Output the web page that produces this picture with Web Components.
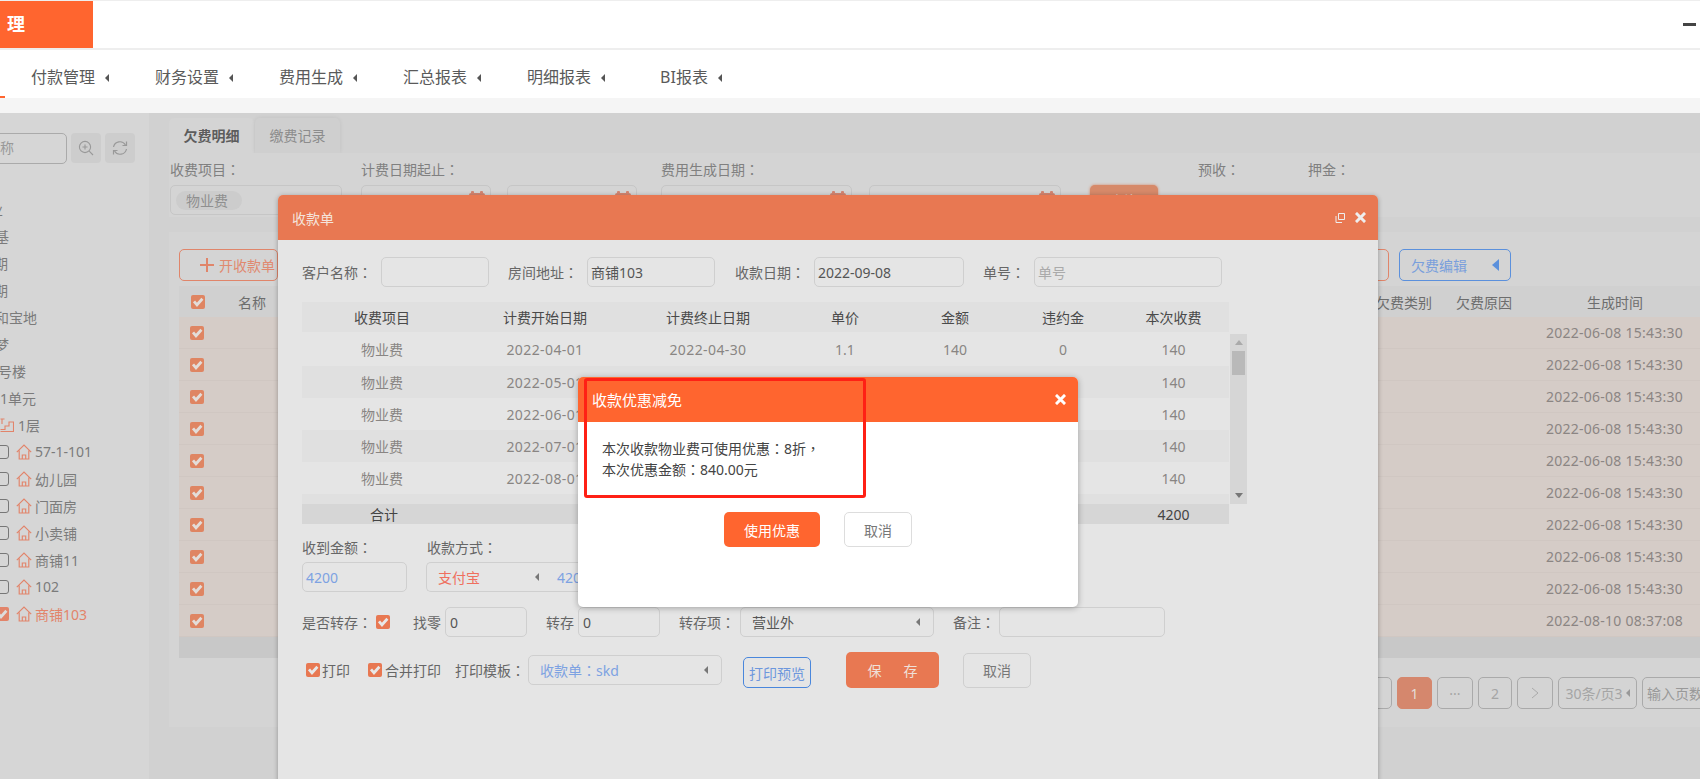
<!DOCTYPE html>
<html lang="zh"><head><meta charset="utf-8"><title>收款单</title>
<style>html,body{margin:0;padding:0;height:779px;overflow:hidden;background:#fff}</style></head>
<body><app-page></app-page>
<script>
const def=(name,css,html)=>customElements.define(name,class extends HTMLElement{
  connectedCallback(){ if(this.shadowRoot) return;
    this.attachShadow({mode:'open'}).innerHTML=`<style>${css}</style>`+(typeof html==='function'?html(this):(html||'<slot></slot>'));}
});
const range=n=>Array.from({length:n},(_,i)=>i);
const C=`<span lang="zh-TW" style="font-family:'Noto Sans CJK TC',sans-serif">：</span>`;
const K=`<span lang="zh-TW" style="font-family:'Noto Sans CJK TC',sans-serif">，</span>`;
const closeIcon=`<svg width="11" height="11" viewBox="0 0 11 11"><path d="M2 2L9 9M9 2L2 9" stroke="currentColor" stroke-width="3" stroke-linecap="square"/></svg>`;

def('x-caret',`:host{display:inline-block;width:0;height:0;border-style:solid;border-width:var(--s,4px) var(--w,5px) var(--s,4px) 0;border-color:transparent currentColor transparent transparent;flex:none}`,'');
def('x-check',`:host{display:inline-flex;flex:none;width:14px;height:14px;line-height:0}`,
  h=>h.hasAttribute('off')
   ?`<svg width="14" height="14" viewBox="0 0 14 14"><rect x=".5" y=".5" width="13" height="13" rx="2.5" fill="none" stroke="#777"/></svg>`
   :`<svg width="14" height="14" viewBox="0 0 14 14"><rect width="14" height="14" rx="2" fill="var(--c,#e87852)"/><path d="M3 6.3L6 9.8L11.4 3.8" fill="none" stroke="var(--k,#e8e8e8)" stroke-width="2.8"/></svg>`);
def('x-box',`:host{display:flex;align-items:center;flex:none;box-sizing:border-box;height:30px;border:1px solid var(--bd,#cdcdcd);border-radius:5px;padding:0 3px;color:#555;white-space:nowrap;overflow:hidden}`);
def('x-label',`:host{display:block;flex:none;white-space:nowrap;color:#666}`);

def('app-header',`:host{display:flex;justify-content:space-between;align-items:center;height:47px;border-top:1px solid #eee;border-bottom:2px solid #eee;background:#fff}
 .logo{width:93px;height:47px;background:#ff652f;color:#fff;font-weight:700;font-size:18px;line-height:47px;padding-left:7px;box-sizing:border-box}
 .min{width:13px;height:3px;background:#444;margin-right:4px}`,
 `<div class="logo">理</div><div class="min"></div>`);

def('app-nav',`:host{display:flex;position:relative;height:48px;box-sizing:border-box;padding:4px 0 0 31px;background:#fff;align-items:center;font-size:16px;color:#5a5a5a}
 .i{display:flex;align-items:center;gap:10px;margin-right:46px;white-space:nowrap}
 .i x-caret{color:#555;--s:4px;--w:4px;margin-top:3px}
 .i.bi{margin-left:9px}
 .mark{position:absolute;left:0;bottom:0;width:5px;height:2px;background:#ff652f}`,
 ()=>['付款管理','财务设置','费用生成','汇总报表','明细报表','BI报表'].map(t=>`<div class="i ${t[0]=='B'?'bi':''}">${t}<x-caret></x-caret></div>`).join('')+`<div class="mark"></div>`);

const house=`<svg width="16" height="16" viewBox="0 0 16 16" fill="none" stroke="#e2846a" stroke-width="1.15"><path d="M.8 8.2L8 1l7.2 7.2M3.2 6.6V15h9.6V6.6M6.3 15v-4h3.4v4"/></svg>`;
const stairs=`<svg width="14" height="14" viewBox="0 0 14 14" fill="none" stroke="#e2846a" stroke-width="1.1"><path d="M.5 13.5h13V4H9v4H5v3.5H.5M.5 1h4M2 1v5"/></svg>`;
def('tree-line',`:host{display:flex;align-items:center;height:27px;white-space:nowrap;color:#7b7b7b;font-size:14px;flex:none}
 :host([sel]){color:#e2846a}
 svg{flex:none}`);
def('side-tree',`:host{display:block;width:149px;flex:none;background:#d6d6d6;overflow:hidden;box-sizing:border-box;padding-top:20px}
 .s{display:flex;gap:4px;margin-left:-33px;height:31px}
 .inp{width:100px;height:31px;box-sizing:border-box;border:1px solid #aaa;border-radius:5px;color:#999;font-size:14px;line-height:27px;padding-left:18px}
 .b{width:30px;height:30px;background:#cdcdcd;border-radius:4px;display:flex;align-items:center;justify-content:center}
 .t{margin-top:31px;display:flex;flex-direction:column}
 .g2{display:flex;align-items:center;gap:7px}
 .g3{display:flex;align-items:center;gap:4px}`,
 ()=>`<div class="s"><div class="inp">名称</div>
  <div class="b"><svg width="16" height="16" viewBox="0 0 16 16" fill="none" stroke="#999" stroke-width="1.1"><circle cx="7" cy="7" r="5.6"/><path d="M11.2 11.2L15 15M7 4.5v5M4.5 7h5"/></svg></div>
  <div class="b"><svg width="16" height="16" viewBox="0 0 16 16" fill="none" stroke="#999" stroke-width="1.2"><path d="M1.5 7A6.5 6.5 0 0 1 13.5 5M14.5 9A6.5 6.5 0 0 1 2.5 11"/><path d="M14.5 1.5v4h-4M1.5 14.5v-4h4"/></svg></div></div>
  <div class="t">
  <tree-line style="margin-left:-25px">物业</tree-line>
  <tree-line style="margin-left:-19px">地基</tree-line>
  <tree-line style="margin-left:-20px">一期</tree-line>
  <tree-line style="margin-left:-20px">二期</tree-line>
  <tree-line style="margin-left:-5px">和宝地</tree-line>
  <tree-line style="margin-left:-19px">美梦</tree-line>
  <tree-line style="margin-left:-2px">号楼</tree-line>
  <tree-line style="margin-left:0">1单元</tree-line>
  <tree-line style="margin-left:0"><div class="g3">${stairs}1层</div></tree-line>
  ${[['57-1-101'],['幼儿园'],['门面房'],['小卖铺'],['商铺11'],['102'],['商铺103',1]].map(([t,s])=>
   `<tree-line style="margin-left:-5px" ${s?'sel':''}><div class="g2"><x-check ${s?'':'off'} style="--c:#e2846a;--k:#ddd"></x-check>${house}<span style="margin-left:-4px">${t}</span></div></tree-line>`).join('')}
  </div>`);

def('bill-grid',`:host{display:block;font-size:14px;color:#6d6d6d}
 .r{display:grid;grid-template-columns:59px 1138px 80px 90px 1fr;align-items:center;height:32px}
 .h{height:31px;background:#d0d0d0}
 .d{background:#d5ccc7;border-bottom:1px solid #d0c7c2;box-sizing:border-box;color:#8b8583}
 x-check{--c:#df8562;--k:#e3ddd9;margin-left:11px}
 .h x-check{margin-left:12px}
 .tm{font-size:14px;letter-spacing:.25px}
 .ht{padding-left:41px}
 .bar{height:21px;background:#c8c8c8}`,
 ()=>`<div class="r h"><x-check></x-check><div>名称</div><div>欠费类别</div><div>欠费原因</div><div class="ht">生成时间</div></div>`+
  range(10).map(i=>`<div class="r d"><x-check></x-check><div></div><div></div><div></div><div class="tm">${i==9?'2022-08-10 08:37:08':'2022-06-08 15:43:30'}</div></div>`).join('')+`<div class="bar"></div>`);

def('bill-pager',`:host{display:flex;gap:5px;height:69px;box-sizing:border-box;padding:19px 0 0 1171px;font-size:14px;color:#a5a5a5;white-space:nowrap}
 .p{height:32px;box-sizing:border-box;border:1px solid #aaa;border-radius:5px;display:flex;align-items:center;justify-content:center;flex:none}
 .on{background:#d5876d;border-color:#d5876d;color:#e5dcd8}`,
 `<div class="p" style="width:42px"></div><div class="p on" style="width:35px">1</div><div class="p" style="width:36px">···</div><div class="p" style="width:34px">2</div>
  <div class="p" style="width:36px"><svg width="8" height="12" viewBox="0 0 8 12" fill="none" stroke="#aaa"><path d="M1 1l6 5-6 5"/></svg></div>
  <div class="p" style="width:79px;gap:3px">30条/页3<x-caret style="--s:4px;--w:4px;color:#999"></x-caret></div>
  <div class="p" style="width:80px;justify-content:flex-start;padding-left:4px;color:#999">输入页数</div>`);

const cal=`<svg width="18" height="14" viewBox="0 0 18 14" fill="#d48570"><rect x="1" y="2" width="16" height="12" rx="2"/><rect x="3" y="0" width="3" height="5" rx="1"/><rect x="12" y="0" width="3" height="5" rx="1"/><rect x="3" y="4" width="12" height="8" fill="#d4d4d4"/></svg>`;
def('bill-panel',`:host{display:block;flex:1;min-width:0;background:#d1d1d1;padding:5px 0 0 20px;font-size:14px;color:#7c7c7c}
 .tabs{display:flex;gap:1px;height:35px}
 .tab{width:85px;height:35px;text-align:center;line-height:35px;border-radius:5px 5px 0 0;background:#cfcfcf;color:#8c8c8c;box-shadow:0 0 4px rgba(0,0,0,.08)}
 .tab.on{background:#d4d4d4;color:#5d5d5d;font-weight:700;box-shadow:none}
 .form{height:64px;background:#d4d4d4;position:relative;display:flex;box-sizing:border-box;padding-left:1px}
 .f{display:flex;flex-direction:column;flex:none}
 .f x-label{height:32px;line-height:32px;color:#808080}
 .row{display:flex;gap:16px;--bd:#c6c6c6}
 .cal{justify-content:flex-end;align-items:flex-start;padding:5px 4px 0 0}
 .tag{background:#cccccc;border-radius:10px;color:#8f8f8f;padding:0 14px 0 10px;height:19px;line-height:19px;margin-left:5px}
 .go{width:68px;height:30px;flex:none;background:#d68969;border-radius:5px;color:#e5d5cd;display:flex;align-items:center;justify-content:center;box-shadow:0 0 3px #d68969}
 .card{margin-top:15px;background:#d4d4d4;padding-left:10px}
 .tb{height:54px;box-sizing:border-box;padding-top:17px;display:flex}
 .btn{height:32px;box-sizing:border-box;border-radius:5px;display:flex;align-items:center;flex:none;white-space:nowrap}
 .o{border:1px solid #e0856a;color:#e08a70}
 .bl{border:1px solid #5b90dc;color:#7a9fdc;width:112px;padding-left:11px;gap:25px;--s:6px;--w:7px}
 .bl x-caret{color:#5b90dc}
 .pg{background:#d4d4d4}`,
 `<div class="tabs"><div class="tab on">欠费明细</div><div class="tab">缴费记录</div></div>
  <div class="form">
   <div class="f" style="width:191px"><x-label>收费项目${C}</x-label><x-box style="width:172px;--bd:#c6c6c6;padding:0"><span class="tag">物业费</span></x-box></div>
   <div class="f" style="width:300px"><x-label>计费日期起止${C}</x-label><div class="row"><x-box class="cal" style="width:130px">${cal}</x-box><x-box class="cal" style="width:130px">${cal}</x-box></div></div>
   <div class="f" style="width:429px"><x-label>费用生成日期${C}</x-label><div class="row"><x-box class="cal" style="width:191px">${cal}</x-box><x-box class="cal" style="width:192px;margin-left:1px">${cal}</x-box><div class="go" style="margin-left:13px">查询</div></div></div>
   <div class="f" style="width:110px;margin-left:108px"><x-label>预收${C}</x-label></div>
   <div class="f"><x-label>押金${C}</x-label></div>
  </div>
  <div class="card">
   <div class="tb">
    <div class="btn o" style="width:99px;padding-left:20px;gap:5px"><svg width="14" height="14" viewBox="0 0 14 14" stroke="#e0856a" stroke-width="2"><path d="M7 0v14M0 7h14"/></svg>开收款单</div>
    <div class="btn o" style="width:89px;margin-left:1022px"></div>
    <div class="btn bl" style="margin-left:10px">欠费编辑<x-caret></x-caret></div>
   </div>
   <bill-grid></bill-grid>
   <bill-pager class="pg"></bill-pager>
  </div>`);

def('fee-table',`:host{display:flex;flex:none;font-size:14px}
 .tbl{width:927px;flex:none}
 .r{display:grid;grid-template-columns:160px 166px 160px 114px 106px 110px 111px;height:32px;align-items:center;text-align:center;color:#898583;background:#e5e5e5}
 .r .dt{letter-spacing:.4px}
 .r:first-child{color:#4a4a4a;height:30px;background:#e0e0e0}
 .r.first{height:34px;background:#e5e5e5}
 .gap{height:10px;background:#e0e0e0}
 .tot{height:20px;background:#d6d6d6;display:grid;grid-template-columns:816px 111px;align-items:center;color:#444}
 .tot div:first-child{padding-left:68px}
 .tot div:last-child{text-align:center}
 .sb{width:17px;height:170px;margin:32px 0 0 1px;background:#d6d6d6;display:flex;flex-direction:column;align-items:center;justify-content:space-between;padding:6px 0;box-sizing:border-box;position:relative}
 .th{position:absolute;top:17px;left:2px;width:13px;height:24px;background:#b9b9b9}
 .u{width:0;height:0;border:4px solid transparent;border-top:0;border-bottom:5px solid #aaa}
 .dn{width:0;height:0;border:4px solid transparent;border-bottom:0;border-top:5px solid #777}`,
 ()=>{const m=['04-01','05-01','06-01','07-01','08-01'],e=['04-30','05-31','06-30','07-31','08-31'];
  return `<div class="tbl"><div class="r">${['收费项目','计费开始日期','计费终止日期','单价','金额','违约金','本次收费'].map(t=>`<div>${t}</div>`).join('')}</div>`+
  m.map((x,i)=>`<div class="r ${i==0?'first':''}" ${i>0?`style="background:${i%2?'#e0e0e0':'#e5e5e5'}"`:''}><div>物业费</div><span class="dt">2022-${x}</span><span class="dt">2022-${e[i]}</span><span>1.1</span><span>140</span><span>0</span><span>140</span></div>`).join('')+
  `<div class="gap"></div><div class="tot"><div>合计</div><div>4200</div></div></div>
  <div class="sb"><div class="u"></div><div class="th"></div><div class="dn"></div></div>`});

def('receipt-dialog',`:host{position:absolute;left:278px;top:195px;width:1100px;height:610px;background:#e5e5e5;border-radius:5px 5px 0 0;box-shadow:0 1px 5px rgba(0,0,0,.3);font-size:14px;color:#666;display:block}
 .hd{height:45px;background:#e87852;border-radius:5px 5px 0 0;color:#f4e4dc;display:flex;align-items:center;padding:0 12px 0 14px;gap:10px}
 .hd .t{flex:1}
 .hd svg{color:#eee}
 .bd{padding:17px 0 0 24px;--bd:#cfcfcf}
 .row{display:flex;align-items:center}
 .r1{height:30px}
 fee-table{margin-top:15px}
 .lb{height:26px;margin-top:12px;line-height:23px;align-items:flex-start}
 .sl{justify-content:space-between;padding:0 13px 0 11px}
 .sl x-caret{color:#777;--s:4px;--w:4px}
 .pay{padding-right:7px;border-right:0}
 .r3{margin-top:15px;height:30px}
 .r4{margin-top:15px;height:36px}
 .pv{width:68px;height:31px;box-sizing:border-box;border:1px solid #4a87dc;border-radius:5px;color:#6d97dd;display:flex;align-items:center;justify-content:center;margin-left:21px;margin-top:5px;flex:none}
 .sv{width:93px;height:36px;background:#e87852;border-radius:5px;color:#efe0d9;display:flex;align-items:center;justify-content:center;margin-left:35px;white-space:pre;flex:none}
 .cn{width:68px;height:35px;box-sizing:border-box;border:1px solid #cfcfcf;border-radius:5px;color:#777;display:flex;align-items:center;justify-content:center;margin-left:24px;flex:none}`,
 `<div class="hd"><div class="t">收款单</div>
   <svg width="10" height="10" viewBox="0 0 10 10" fill="none" stroke="#eee"><path d="M3.5.5h6v6h-6zM1 3v6.5h6"/></svg>
   ${closeIcon}</div>
  <div class="bd">
   <div class="row r1"><x-label style="width:79px">客户名称${C}</x-label><x-box style="width:108px"></x-box>
    <x-label style="width:79px;margin-left:19px">房间地址${C}</x-label><x-box style="width:128px">商铺103</x-box>
    <x-label style="width:79px;margin-left:20px">收款日期${C}</x-label><x-box style="width:150px">2022-09-08</x-box>
    <x-label style="width:51px;margin-left:19px">单号${C}</x-label><x-box style="width:188px;color:#aaa">单号</x-box></div>
   <fee-table></fee-table>
   <div class="row lb"><x-label style="width:125px">收到金额${C}</x-label><x-label>收款方式${C}</x-label></div>
   <div class="row"><x-box style="width:105px;color:#7da2e2">4200</x-box>
    <x-box class="sl pay" style="width:120px;margin-left:19px;color:#ef6f5e;border-radius:5px 0 0 5px">支付宝<x-caret></x-caret></x-box>
    <x-box style="width:150px;color:#7da2e2;padding-left:11px;border-left:0;border-radius:0">4200</x-box></div>
   <div class="row r3"><x-label style="width:74px">是否转存${C}</x-label><x-check></x-check>
    <x-label style="width:32px;margin-left:23px">找零</x-label><x-box style="width:82px;color:#555;padding-left:4px">0</x-box>
    <x-label style="width:32px;margin-left:19px">转存</x-label><x-box style="width:82px;padding-left:4px">0</x-box>
    <x-label style="width:61px;margin-left:19px">转存项${C}</x-label><x-box class="sl" style="width:194px">营业外<x-caret></x-caret></x-box>
    <x-label style="width:46px;margin-left:19px">备注${C}</x-label><x-box style="width:166px"></x-box></div>
   <div class="row r4"><x-check style="margin-left:4px"></x-check><x-label style="width:46px;margin-left:2px">打印</x-label><x-check></x-check>
    <x-label style="width:70px;margin-left:3px">合并打印</x-label><x-label style="width:73px">打印模板${C}</x-label>
    <x-box class="sl" style="width:194px;color:#7da2e2"><span>收款单${C}skd</span><x-caret></x-caret></x-box>
    <div class="pv">打印预览</div><div class="sv">保      存</div><div class="cn">取消</div></div>
  </div>`);

def('discount-dialog',`:host{position:absolute;left:578px;top:377px;width:500px;height:230px;display:block;background:#fff;border-radius:5px;box-shadow:0 1px 6px rgba(0,0,0,.3);font-size:14px;color:#444}
 .hd{height:45px;background:#ff652f;border-radius:5px 5px 0 0;color:#fff;font-size:15px;display:flex;align-items:center;justify-content:space-between;padding:0 12px 0 14px}
 .tx{padding:16px 0 0 24px;line-height:20px;height:59px}
 .btns{display:flex;margin:15px 0 0 146px;gap:24px}
 .a,.c{height:35px;border-radius:5px;display:flex;align-items:center;justify-content:center;box-sizing:border-box}
 .a{width:96px;background:#ff652f;color:#fff}
 .c{width:68px;border:1px solid #ddd;color:#777}
 .mark{position:absolute;left:6px;top:1px;width:282px;height:120px;box-sizing:border-box;border:3px solid #ff2015;border-radius:3px}`,
 `<div class="hd"><span>收款优惠减免</span>${closeIcon}</div>
  <div class="tx">本次收款物业费可使用优惠${C}8折${K}<br>本次优惠金额${C}840.00元</div>
  <div class="btns"><div class="a">使用优惠</div><div class="c">取消</div></div>
  <div class="mark"></div>`);

def('app-page',`:host{display:block;position:relative;width:1700px;height:779px;overflow:hidden;font-family:"Noto Sans","Noto Sans CJK SC",sans-serif;font-size:14px;background:#fff}
 .strip{height:15px;background:#f5f5f5}
 .main{display:flex;height:667px;overflow:hidden}`,
 `<app-header></app-header><app-nav></app-nav><div class="strip"></div>
  <div class="main"><side-tree></side-tree><bill-panel></bill-panel></div>
  <receipt-dialog></receipt-dialog><discount-dialog></discount-dialog>`);
</script></body></html>
